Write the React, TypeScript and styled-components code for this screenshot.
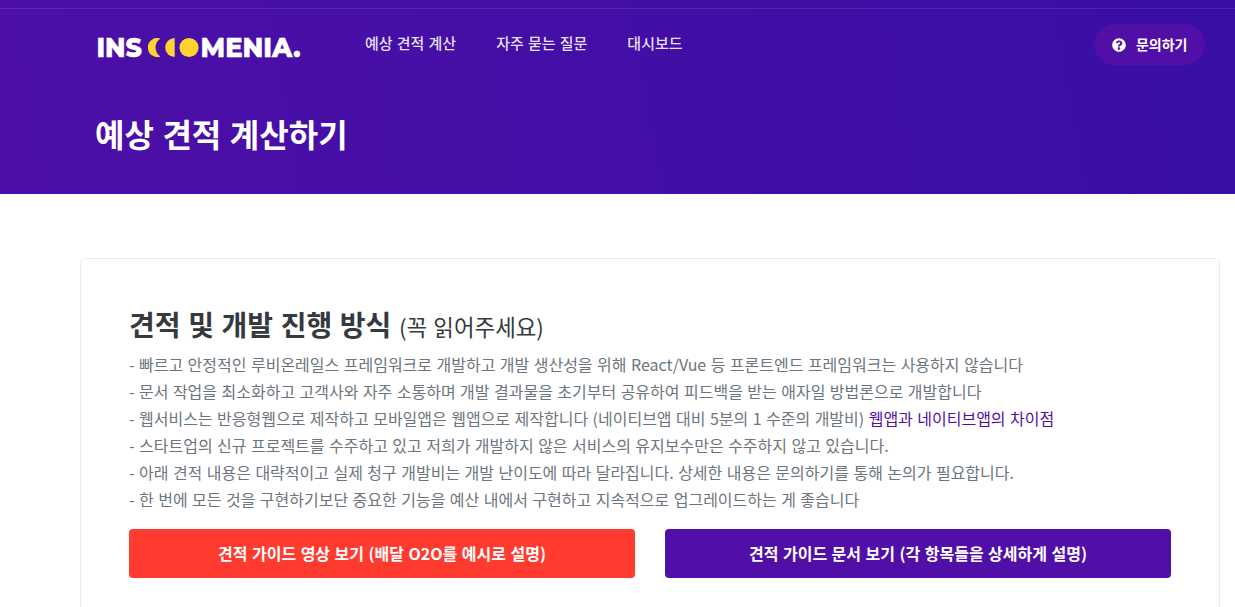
import React from "react";
import styled, { createGlobalStyle } from "styled-components";
import { FaQuestionCircle } from "react-icons/fa";

const GlobalStyle = createGlobalStyle`
  * {
    box-sizing: border-box;
  }

  body {
    margin: 0;
    background-color: #fff;
    color: #343a40;
    font-family: "Noto Sans CJK KR", sans-serif;
    font-size: 16px;
    overflow: hidden;
  }

  a {
    text-decoration: none;
  }
`;

const Page = styled.div`
  height: 607px;
  overflow: hidden;
`;

const Hero = styled.header`
  height: 194px;
  padding-top: 8px;
  background: linear-gradient(80deg, #4d0fa7 0%, #380ea5 100%);
`;

const Navbar = styled.div`
  display: flex;
  align-items: flex-start;
  height: 73px;
  padding: 15px 30px 0 97px;
  border-top: 1px solid rgba(255, 255, 255, 0.1);
`;

const LogoLink = styled.a`
  display: block;
  height: 36px;
  margin-top: 6px;
`;

const LogoText = styled.text`
  font-family: "Montserrat", "Inter", sans-serif;
  font-size: 26.5px;
  font-weight: 800;
  fill: #fff;
  stroke: #fff;
  stroke-width: 0.4px;
`;

const Menu = styled.nav`
  display: flex;
  gap: 40px;
  margin-left: 62px;
`;

const MenuLink = styled.a`
  color: rgba(255, 255, 255, 0.88);
  font-size: 15px;
  font-weight: 500;
  line-height: 37px;
  word-spacing: 0.054em;
`;

const ContactButton = styled.a`
  display: flex;
  align-items: center;
  gap: 10px;
  height: 41px;
  margin-left: auto;
  padding: 0 17.5px;
  border-radius: 21px;
  background-color: #510fa8;
  color: #fff;
  font-size: 14px;
  font-weight: 700;
`;

const ContactLabel = styled.span`
  padding-bottom: 2px;
`;

const PageTitle = styled.h1`
  margin: 29px 0 0 95px;
  color: #fff;
  font-size: 32px;
  font-weight: 700;
  line-height: 46px;
  word-spacing: 0.04em;
`;

const Card = styled.section`
  width: 1140px;
  height: 400px;
  margin: 64px 0 0 80px;
  padding: 41px 48px;
  border: 1px solid #e9ecef;
  border-radius: 5px;
`;

const CardTitle = styled.h2`
  margin: 0 0 1px;
  font-size: 28px;
  font-weight: 700;
  line-height: 48px;
  word-spacing: 0.045em;
`;

const TitleNote = styled.span`
  font-size: 80%;
  font-weight: 400;
`;

const NoticeList = styled.div`
  color: #6c757d;
  line-height: 27px;
  word-spacing: 0.054em;
`;

const Notice = styled.div`
  white-space: nowrap;
`;

const NoticeLink = styled.a`
  color: #510fa8;
`;

const ButtonRow = styled.div`
  display: grid;
  grid-template-columns: 1fr 1fr;
  gap: 30px;
  margin-top: 16px;
`;

const GuideButton = styled.a<{ color: string }>`
  height: 49px;
  border-radius: 4px;
  background-color: ${({ color }) => color};
  color: #fff;
  font-weight: 700;
  line-height: 49px;
  text-align: center;
  word-spacing: 0.054em;
`;

const menus = ["예상 견적 계산", "자주 묻는 질문", "대시보드"];

const notices = [
  { text: "빠르고 안정적인 루비온레일스 프레임워크로 개발하고 개발 생산성을 위해 React/Vue 등 프론트엔드 프레임워크는 사용하지 않습니다" },
  { text: "문서 작업을 최소화하고 고객사와 자주 소통하며 개발 결과물을 초기부터 공유하여 피드백을 받는 애자일 방법론으로 개발합니다" },
  {
    text: "웹서비스는 반응형웹으로 제작하고 모바일앱은 웹앱으로 제작합니다 (네이티브앱 대비 5분의 1 수준의 개발비)",
    link: "웹앱과 네이티브앱의 차이점",
  },
  { text: "스타트업의 신규 프로젝트를 수주하고 있고 저희가 개발하지 않은 서비스의 유지보수만은 수주하지 않고 있습니다." },
  { text: "아래 견적 내용은 대략적이고 실제 청구 개발비는 개발 난이도에 따라 달라집니다. 상세한 내용은 문의하기를 통해 논의가 필요합니다." },
  { text: "한 번에 모든 것을 구현하기보단 중요한 기능을 예산 내에서 구현하고 지속적으로 업그레이드하는 게 좋습니다" },
];

// 달 모양이 들어간 로고
const Logo: React.FC = () => (
  <svg width="206" height="36" viewBox="0 -6 206 36">
    <LogoText x="-0.5" y="20.5" textLength="45.5" lengthAdjust="spacingAndGlyphs">INS</LogoText>
    <g fill="#ffd430">
      <path d="M63.5 2.4A9.6 9.6 0 1 0 63.5 20.6A10.8 10.8 0 0 1 63.5 2.4Z" />
      <path d="M77.7 2A9.5 9.5 0 0 0 77.7 21Z" />
      <circle cx="92" cy="11.5" r="9.6" />
    </g>
    <LogoText x="103.5" y="20.5" textLength="100" lengthAdjust="spacingAndGlyphs">MENIA.</LogoText>
  </svg>
);

const App: React.FC = () => {
  return (
    <Page>
      <GlobalStyle />
      <Hero>
        <Navbar>
          <LogoLink>
            <Logo />
          </LogoLink>
          <Menu>
            {menus.map((menu) => (
              <MenuLink key={menu}>{menu}</MenuLink>
            ))}
          </Menu>
          <ContactButton>
            <FaQuestionCircle />
            <ContactLabel>문의하기</ContactLabel>
          </ContactButton>
        </Navbar>
        <PageTitle>예상 견적 계산하기</PageTitle>
      </Hero>
      <Card>
        <CardTitle>
          견적 및 개발 진행 방식 <TitleNote>(꼭 읽어주세요)</TitleNote>
        </CardTitle>
        <NoticeList>
          {notices.map(({ text, link }) => (
            <Notice key={text}>
              - {text} {link && <NoticeLink>{link}</NoticeLink>}
            </Notice>
          ))}
        </NoticeList>
        <ButtonRow>
          <GuideButton color="#ff3b30">견적 가이드 영상 보기 (배달 O2O를 예시로 설명)</GuideButton>
          <GuideButton color="#510fa8">견적 가이드 문서 보기 (각 항목들을 상세하게 설명)</GuideButton>
        </ButtonRow>
      </Card>
    </Page>
  );
};

export default App;
